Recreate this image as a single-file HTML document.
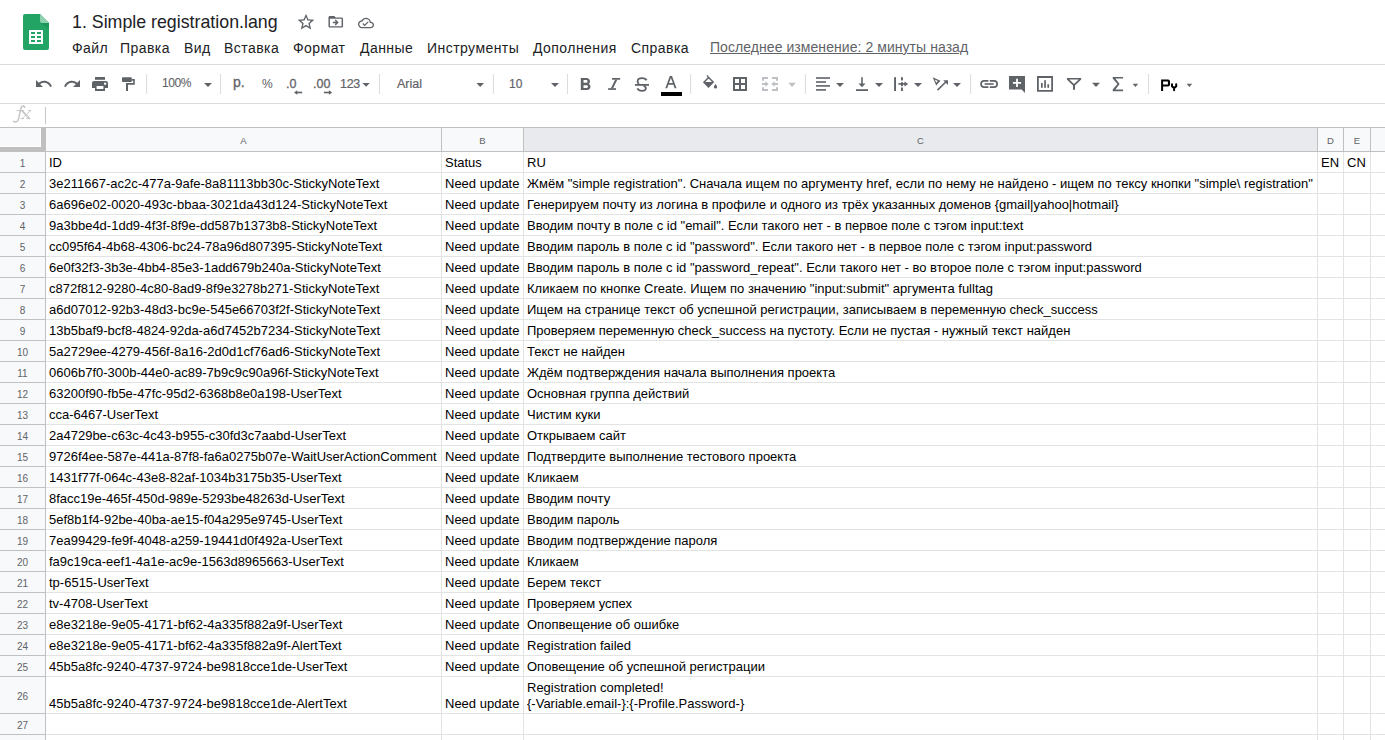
<!DOCTYPE html>
<html><head><meta charset="utf-8"><style>
*{box-sizing:border-box}
html,body{margin:0;padding:0}
body{width:1385px;height:740px;overflow:hidden;position:relative;background:#fff;font-family:"Liberation Sans",sans-serif;color:#000}
.a{position:absolute}
.hl{position:absolute;left:0;width:1385px;height:1px}
.vl{position:absolute;width:1px}
.menu{position:absolute;top:40px;font-size:14px;line-height:17px;color:#202124;white-space:pre;letter-spacing:0.45px}
.ic{position:absolute}
.sep{position:absolute;top:74px;width:1px;height:20px;background:#dadce0}
.tri{position:absolute;width:0;height:0;border-left:4px solid transparent;border-right:4px solid transparent;border-top:4px solid #5f6368}
.c{position:absolute;font-size:13px;line-height:15px;white-space:pre;color:#000;transform-origin:0 12px;transform:scaleY(1.05)}
.rh{position:absolute;left:0;width:45px;text-align:center;font-size:10px;line-height:12px;color:#5f6368}
.ch{position:absolute;top:134.5px;text-align:center;font-size:9.5px;line-height:12px;color:#5f6368}
</style></head><body>

<svg class="a" style="left:23px;top:14px" width="26" height="36" viewBox="0 0 26 36">
<path d="M2 0H17L26 9V34A2 2 0 0 1 24 36H2A2 2 0 0 1 0 34V2A2 2 0 0 1 2 0Z" fill="#21a464"/>
<path d="M17 0L26 9H19A2 2 0 0 1 17 7Z" fill="#8ed1b1"/>
<path d="M17 9L26 9V14.5Z" fill="#1a8a50" opacity="0.55"/>
<rect x="6" y="16" width="14" height="14" fill="#fff"/>
<rect x="8" y="18" width="4" height="2" fill="#21a464"/><rect x="14" y="18" width="4" height="2" fill="#21a464"/>
<rect x="8" y="22" width="4" height="2" fill="#21a464"/><rect x="14" y="22" width="4" height="2" fill="#21a464"/>
<rect x="8" y="26" width="4" height="2" fill="#21a464"/><rect x="14" y="26" width="4" height="2" fill="#21a464"/>
</svg>
<div class="a" style="left:72px;top:11px;font-size:17.8px;line-height:22px;color:#202124;white-space:pre">1. Simple registration.lang</div>
<svg class="ic" style="left:296px;top:12px" width="20" height="20" viewBox="0 0 24 24"><path fill="#5f6368" d="M22 9.24l-7.19-.62L12 2 9.19 8.63 2 9.24l5.46 4.73L5.82 21 12 17.27 18.18 21l-1.63-7.03L22 9.24zM12 15.4l-3.76 2.27 1-4.28-3.32-2.88 4.38-.38L12 6.1l1.71 4.04 4.38.38-3.32 2.88 1 4.28L12 15.4z"/></svg>
<svg class="ic" style="left:326.7px;top:13px" width="17.5" height="17.5" viewBox="0 0 24 24"><path fill="#5f6368" d="M20 6h-8l-2-2H4c-1.1 0-1.99.9-1.99 2L2 18c0 1.1.9 2 2 2h16c1.1 0 2-.9 2-2V8c0-1.1-.9-2-2-2zm0 12H4V8h16v10zm-8.01-9l-1.41 1.41L12.16 12H8v2h4.16l-1.59 1.59L11.99 17 16 13.01 11.99 9z"/></svg>
<svg class="ic" style="left:358px;top:14.8px" width="16" height="16" viewBox="0 0 24 24"><path fill="#5f6368" d="M19.35 10.04C18.67 6.59 15.64 4 12 4 9.11 4 6.6 5.64 5.35 8.04 2.34 8.36 0 10.91 0 14c0 3.31 2.69 6 6 6h13c2.76 0 5-2.24 5-5 0-2.64-2.05-4.78-4.65-4.96zM19 18H6c-2.21 0-4-1.79-4-4 0-2.05 1.53-3.76 3.56-3.97l1.07-.11.5-.95C8.08 7.14 9.94 6 12 6c2.62 0 4.88 1.86 5.39 4.43l.3 1.5 1.53.11c1.56.1 2.78 1.41 2.78 2.96 0 1.65-1.35 3-3 3zm-9-3.82l-2.09-2.09L6.5 13.5 10 17l6.01-6.01-1.41-1.41z"/></svg>
<div class="menu" style="left:72px">Файл</div>
<div class="menu" style="left:120px">Правка</div>
<div class="menu" style="left:184px">Вид</div>
<div class="menu" style="left:224px">Вставка</div>
<div class="menu" style="left:293px">Формат</div>
<div class="menu" style="left:360px">Данные</div>
<div class="menu" style="left:427px">Инструменты</div>
<div class="menu" style="left:533px">Дополнения</div>
<div class="menu" style="left:631px">Справка</div>
<div class="menu" style="left:710px;top:39px;color:#5f6368;text-decoration:underline;letter-spacing:0.06px">Последнее изменение: 2 минуты назад</div>
<div class="hl" style="top:64px;background:#dadce0"></div>
<div class="hl" style="top:103px;background:#dadce0"></div>
<div class="hl" style="top:127px;background:#c0c0c0"></div>
<svg class="a" style="left:0;top:64px" width="1385" height="40" viewBox="0 64 1385 40">
<g fill="#5f6368">
<!-- undo -->
<path transform="translate(34.45 74.58) scale(0.775)" d="M12.5 8c-2.65 0-5.05.99-6.9 2.6L2 7v9h9l-3.62-3.62c1.39-1.16 3.16-1.88 5.12-1.88 3.54 0 6.55 2.31 7.6 5.5l2.37-.78C21.08 11.03 17.15 8 12.5 8z"/>
<!-- redo -->
<path transform="translate(81.55 74.58) scale(-0.775 0.775)" d="M12.5 8c-2.65 0-5.05.99-6.9 2.6L2 7v9h9l-3.62-3.62c1.39-1.16 3.16-1.88 5.12-1.88 3.54 0 6.55 2.31 7.6 5.5l2.37-.78C21.08 11.03 17.15 8 12.5 8z"/>
<!-- print -->
<rect x="95" y="77" width="10" height="2.8"/>
<path d="M94 81H106A2 2 0 0 1 108 83V88H105V86H95V88H92V83A2 2 0 0 1 94 81Z"/>
<rect x="95" y="89" width="10" height="2"/>
<rect x="95" y="86" width="1.6" height="5"/><rect x="103.4" y="86" width="1.6" height="5"/>
<rect x="104" y="82.7" width="2.2" height="2" fill="#fff"/>
<!-- paint format -->
<rect x="122" y="77.2" width="9.8" height="4.8" rx="0.8"/>
<path d="M131.8 79.1H134.8V84.7H128V91.1H126V83.1H133.2V80.7H131.8Z"/>
<!-- dropdown triangles -->
<path d="M204 83H212L208 87Z"/>
<path d="M362.4 83H369.8L366.1 86.8Z"/>
<path d="M476.4 83H484L480.2 87Z"/>
<path d="M551 83H559L555 87Z"/>
<path d="M836 83H844L840 87Z"/>
<path d="M875 83H883L879 87Z"/>
<path d="M914 83H922L918 87Z"/>
<path d="M953 83H961L957 87Z"/>
<path d="M1092 82.7H1100L1096 86.9Z"/>
<path d="M1132.6 83.8H1138.2L1135.4 86.9Z"/>
<path d="M1186.6 83.8H1192.2L1189.4 86.9Z"/>
<!-- .0 arrows -->
<rect x="296" y="91.7" width="6.2" height="1.6"/><path d="M294 92.5L297.3 90.2V94.8Z"/>
<rect x="323.9" y="91.7" width="6" height="1.6"/><path d="M332.2 92.5L328.9 90.2V94.8Z"/>
<!-- B -->
<path transform="translate(574.5 74.5) scale(0.9 0.865)" d="M15.6 10.79c.97-.67 1.65-1.77 1.65-2.79 0-2.26-1.75-4-4-4H7v14h7.04c2.09 0 3.71-1.7 3.71-3.79 0-1.52-.86-2.82-2.15-3.42zM10 6.5h3c.83 0 1.5.67 1.5 1.5s-.67 1.5-1.5 1.5h-3v-3zm3.5 9H10v-3h3.5c.83 0 1.5.67 1.5 1.5s-.67 1.5-1.5 1.5z"/>
<!-- I -->
<rect x="612" y="78" width="8.2" height="1.7"/>
<rect x="608.1" y="88.2" width="7.9" height="1.7"/>
<path d="M615.2 79.5H617.4L613 88.5H610.8Z"/>
<!-- S -->
<path d="M646.6 80.3C645.9 79 644.3 78.2 642.2 78.2C639.4 78.2 637.6 79.7 637.6 81.5C637.6 82.6 638.2 83.3 639 83.9" fill="none" stroke="#5f6368" stroke-width="1.8"/>
<path d="M643.6 85.8C645 86.3 645.9 86.9 645.9 88C645.9 89.6 644.4 90.8 642 90.8C639.7 90.8 638.1 89.8 637.4 88.3" fill="none" stroke="#5f6368" stroke-width="1.8"/>
<rect x="635" y="84" width="14" height="1.8"/>
<!-- A black bar -->
<rect x="661" y="92" width="21" height="4" fill="#000"/>
<!-- A -->
<path d="M669.8 76H672L676.5 88.2H674.6L673.4 84.8H668.4L667.2 88.2H665.3Z M669 83.1H672.8L670.9 77.9Z"/>
<!-- fill bucket -->
<path d="M708.6 76.5L714.2 82.1L708.5 87.9L702.9 82.2Z M708.6 78.6L705.2 82H712Z" fill-rule="evenodd"/>
<path d="M706.5 75.6L707.6 75L709.6 78.2L708.6 78.9Z"/>
<path d="M715.5 83.9C716.2 85 717.1 86 717.1 86.9A1.6 1.6 0 0 1 713.9 86.9C713.9 86 714.8 85 715.5 83.9Z"/>
<!-- borders -->
<path d="M733 77H747V91H733Z M735 79V83H739V79Z M741 79V83H745V79Z M735 85V89H739V85Z M741 85V89H745V85Z" fill-rule="evenodd"/>
</g>
<g fill="#bdc1c6">
<!-- merge disabled -->
<path d="M762 77H768V79H764V80.7H762Z M772 77H778V80.7H776V79H772Z M762 87.3H764V89H768V91H762Z M776 87.3H778V91H772V89H776Z"/>
<path d="M762 83.1H765.4V81.3L768.7 84L765.4 86.7V84.9H762Z"/>
<path d="M778 83.1H774.6V81.3L771.3 84L774.6 86.7V84.9H778Z"/>
<path d="M788.3 82.8H795.9L792.1 87Z"/>
</g>
<g fill="#5f6368">
<!-- align left -->
<rect x="816" y="77.2" width="14" height="1.6"/>
<rect x="816" y="81.2" width="10" height="1.6"/>
<rect x="816" y="85.1" width="14" height="1.6"/>
<rect x="816" y="89.1" width="10" height="1.6"/>
<!-- valign bottom -->
<rect x="861.2" y="77.2" width="1.6" height="7"/>
<path d="M858.5 83.6H865.5L862 87.3Z"/>
<rect x="856" y="89.2" width="12" height="1.8"/>
<!-- wrap -->
<rect x="894.1" y="77.2" width="1.9" height="13.8"/>
<rect x="901" y="77.2" width="1.9" height="3.2"/>
<rect x="901" y="82.2" width="1.9" height="4"/>
<rect x="901" y="87.5" width="1.9" height="3.5"/>
<rect x="898.4" y="83.1" width="7" height="1.6"/>
<path d="M904.5 81.4L908.2 83.9L904.5 86.4Z"/>
<!-- rotate -->
<path d="M932.7 77.2L940.5 80.7L936.2 85.6Z M934.8 79.6L937.8 80.9L936.2 82.7Z" fill-rule="evenodd"/>
<path d="M937 89.6L946.2 80.5L947.3 81.6L938.1 90.7Z"/>
<path d="M943.2 80.3H948V85.1Z"/>
<!-- link -->
<path d="M984.2 80A4 4 0 0 0 984.2 88H988.4V86.3H984.2A2.3 2.3 0 0 1 984.2 81.7H988.4V80Z"/>
<path d="M994 80A4 4 0 0 1 994 88H989.8V86.3H994A2.3 2.3 0 0 0 994 81.7H989.8V80Z"/>
<rect x="984.6" y="83.2" width="9" height="1.6"/>
<!-- comment -->
<path d="M1009 76.1H1025V93L1021.6 89.5H1009Z"/>
<path d="M1016.1 78.7H1017.9V81.9H1021.1V83.7H1017.9V86.9H1016.1V83.7H1012.9V81.9H1016.1Z" fill="#fff"/>
<!-- chart -->
<path d="M1037 76.1H1053V91.7H1037Z M1038.8 77.9V89.9H1051.2V77.9Z" fill-rule="evenodd"/>
<rect x="1041" y="83" width="1.7" height="4.8"/>
<rect x="1044.2" y="80.2" width="1.7" height="7.6"/>
<rect x="1047.4" y="84.3" width="1.7" height="3.5"/>
<!-- filter -->
<path d="M1066.9 78H1081.2V79.6L1075 85.6V89.8H1073V85.6L1066.9 79.6Z M1069.3 79.6L1074 84.1L1078.7 79.6Z" fill-rule="evenodd"/>
<!-- sigma -->
<path d="M1112.7 76.9H1123.1V78.6H1115.4L1119.6 84L1115.4 89.5H1123.1V91.2H1112.7V89.6L1117.4 84L1112.7 78.5Z"/>
</g>
<!-- Py -->
<path fill="#000" fill-rule="evenodd" d="M1161.1 79.4H1168A2 2 0 0 1 1170 81.4V84.5A2 2 0 0 1 1168 86.5H1163.1V91H1161.1Z M1163.1 81.5V84.5H1167.9V81.5Z"/>
<path fill="none" stroke="#000" stroke-width="2" stroke-linecap="round" d="M1172 84.3V86.2L1174.1 88.1L1176.2 86.2V84.3 M1174.1 88V90.2"/>
<!-- separators -->
<g fill="#dadce0">
<rect x="146" y="74" width="1" height="20"/>
<rect x="220" y="74" width="1" height="20"/>
<rect x="379" y="74" width="1" height="20"/>
<rect x="493" y="74" width="1" height="20"/>
<rect x="567" y="74" width="1" height="20"/>
<rect x="690" y="74" width="1" height="20"/>
<rect x="805" y="74" width="1" height="20"/>
<rect x="970" y="74" width="1" height="20"/>
<rect x="1148" y="74" width="1" height="20"/>
</g>
</svg>
<div class="a" style="left:162px;top:77px;font-size:12px;line-height:13px;color:#5f6368;letter-spacing:-0.4px;-webkit-text-stroke:0.1px #5f6368">100%</div>
<div class="a" style="left:233px;top:75px;font-size:14px;line-height:15px;color:#5f6368;-webkit-text-stroke:0.3px #5f6368">р.</div>
<div class="a" style="left:262px;top:78px;font-size:12px;line-height:13px;color:#5f6368;letter-spacing:-0.5px;-webkit-text-stroke:0.05px #5f6368">%</div>
<div class="a" style="left:286px;top:77px;font-size:12.5px;line-height:14px;color:#5f6368;white-space:pre;-webkit-text-stroke:0.3px #5f6368">.0</div>
<div class="a" style="left:313px;top:77px;font-size:12.5px;line-height:14px;color:#5f6368;white-space:pre;-webkit-text-stroke:0.3px #5f6368">.00</div>
<div class="a" style="left:340px;top:77px;font-size:12.5px;line-height:14px;color:#5f6368;white-space:pre;letter-spacing:-0.3px;-webkit-text-stroke:0.2px #5f6368">123</div>
<div class="a" style="left:397px;top:76.5px;font-size:12.5px;line-height:15px;color:#5f6368;-webkit-text-stroke:0.2px #5f6368">Arial</div>
<div class="a" style="left:509px;top:77px;font-size:12px;line-height:14px;color:#5f6368;-webkit-text-stroke:0.2px #5f6368">10</div>


<svg class="a" style="left:0;top:103px" width="45" height="24" viewBox="0 103 45 24"><g fill="none" stroke="#c4c7c5" stroke-linecap="round">
<path d="M24.6 107.6C24.6 105.9 22.6 105.4 21.6 106.8C20.4 108.6 19.4 116.8 18.3 119.6C17.4 122 15.2 122.6 13.6 121.4" stroke-width="1.5"/>
<path d="M16.9 110.6H22.6" stroke-width="1"/>
<path d="M22.2 110.8L29.4 118.5" stroke-width="1.7"/>
<path d="M30.2 110.9L22.2 118.5" stroke-width="0.9"/>
<path d="M20.9 110.6H23.4 M28.3 110.6H30.8 M21 118.6H23.6 M26.6 118.6H29.8" stroke-width="1"/>
</g></svg>
<div class="vl" style="left:45px;top:107px;height:17px;background:#c4c7c5"></div>
<div class="a" style="left:0;top:128px;width:1385px;height:23px;background:#f8f9fa"></div>
<div class="a" style="left:524px;top:128px;width:793px;height:23px;background:#e8eaed"></div>
<div class="a" style="left:0;top:152px;width:45px;height:588px;background:#f8f9fa"></div>
<div class="a" style="left:0;top:172px;width:45px;height:1px;background:#c0c0c0"></div>
<div class="a" style="left:46px;top:172px;width:1339px;height:1px;background:#e2e3e3"></div>
<div class="a" style="left:0;top:193px;width:45px;height:1px;background:#c0c0c0"></div>
<div class="a" style="left:46px;top:193px;width:1339px;height:1px;background:#e2e3e3"></div>
<div class="a" style="left:0;top:214px;width:45px;height:1px;background:#c0c0c0"></div>
<div class="a" style="left:46px;top:214px;width:1339px;height:1px;background:#e2e3e3"></div>
<div class="a" style="left:0;top:235px;width:45px;height:1px;background:#c0c0c0"></div>
<div class="a" style="left:46px;top:235px;width:1339px;height:1px;background:#e2e3e3"></div>
<div class="a" style="left:0;top:256px;width:45px;height:1px;background:#c0c0c0"></div>
<div class="a" style="left:46px;top:256px;width:1339px;height:1px;background:#e2e3e3"></div>
<div class="a" style="left:0;top:277px;width:45px;height:1px;background:#c0c0c0"></div>
<div class="a" style="left:46px;top:277px;width:1339px;height:1px;background:#e2e3e3"></div>
<div class="a" style="left:0;top:298px;width:45px;height:1px;background:#c0c0c0"></div>
<div class="a" style="left:46px;top:298px;width:1339px;height:1px;background:#e2e3e3"></div>
<div class="a" style="left:0;top:319px;width:45px;height:1px;background:#c0c0c0"></div>
<div class="a" style="left:46px;top:319px;width:1339px;height:1px;background:#e2e3e3"></div>
<div class="a" style="left:0;top:340px;width:45px;height:1px;background:#c0c0c0"></div>
<div class="a" style="left:46px;top:340px;width:1339px;height:1px;background:#e2e3e3"></div>
<div class="a" style="left:0;top:361px;width:45px;height:1px;background:#c0c0c0"></div>
<div class="a" style="left:46px;top:361px;width:1339px;height:1px;background:#e2e3e3"></div>
<div class="a" style="left:0;top:382px;width:45px;height:1px;background:#c0c0c0"></div>
<div class="a" style="left:46px;top:382px;width:1339px;height:1px;background:#e2e3e3"></div>
<div class="a" style="left:0;top:403px;width:45px;height:1px;background:#c0c0c0"></div>
<div class="a" style="left:46px;top:403px;width:1339px;height:1px;background:#e2e3e3"></div>
<div class="a" style="left:0;top:424px;width:45px;height:1px;background:#c0c0c0"></div>
<div class="a" style="left:46px;top:424px;width:1339px;height:1px;background:#e2e3e3"></div>
<div class="a" style="left:0;top:445px;width:45px;height:1px;background:#c0c0c0"></div>
<div class="a" style="left:46px;top:445px;width:1339px;height:1px;background:#e2e3e3"></div>
<div class="a" style="left:0;top:466px;width:45px;height:1px;background:#c0c0c0"></div>
<div class="a" style="left:46px;top:466px;width:1339px;height:1px;background:#e2e3e3"></div>
<div class="a" style="left:0;top:487px;width:45px;height:1px;background:#c0c0c0"></div>
<div class="a" style="left:46px;top:487px;width:1339px;height:1px;background:#e2e3e3"></div>
<div class="a" style="left:0;top:508px;width:45px;height:1px;background:#c0c0c0"></div>
<div class="a" style="left:46px;top:508px;width:1339px;height:1px;background:#e2e3e3"></div>
<div class="a" style="left:0;top:529px;width:45px;height:1px;background:#c0c0c0"></div>
<div class="a" style="left:46px;top:529px;width:1339px;height:1px;background:#e2e3e3"></div>
<div class="a" style="left:0;top:550px;width:45px;height:1px;background:#c0c0c0"></div>
<div class="a" style="left:46px;top:550px;width:1339px;height:1px;background:#e2e3e3"></div>
<div class="a" style="left:0;top:571px;width:45px;height:1px;background:#c0c0c0"></div>
<div class="a" style="left:46px;top:571px;width:1339px;height:1px;background:#e2e3e3"></div>
<div class="a" style="left:0;top:592px;width:45px;height:1px;background:#c0c0c0"></div>
<div class="a" style="left:46px;top:592px;width:1339px;height:1px;background:#e2e3e3"></div>
<div class="a" style="left:0;top:613px;width:45px;height:1px;background:#c0c0c0"></div>
<div class="a" style="left:46px;top:613px;width:1339px;height:1px;background:#e2e3e3"></div>
<div class="a" style="left:0;top:634px;width:45px;height:1px;background:#c0c0c0"></div>
<div class="a" style="left:46px;top:634px;width:1339px;height:1px;background:#e2e3e3"></div>
<div class="a" style="left:0;top:655px;width:45px;height:1px;background:#c0c0c0"></div>
<div class="a" style="left:46px;top:655px;width:1339px;height:1px;background:#e2e3e3"></div>
<div class="a" style="left:0;top:676px;width:45px;height:1px;background:#c0c0c0"></div>
<div class="a" style="left:46px;top:676px;width:1339px;height:1px;background:#e2e3e3"></div>
<div class="a" style="left:0;top:713px;width:45px;height:1px;background:#c0c0c0"></div>
<div class="a" style="left:46px;top:713px;width:1339px;height:1px;background:#e2e3e3"></div>
<div class="a" style="left:0;top:734px;width:45px;height:1px;background:#c0c0c0"></div>
<div class="a" style="left:46px;top:734px;width:1339px;height:1px;background:#e2e3e3"></div>
<div class="a" style="left:0;top:755px;width:45px;height:1px;background:#c0c0c0"></div>
<div class="a" style="left:46px;top:755px;width:1339px;height:1px;background:#e2e3e3"></div>
<div class="hl" style="top:151px;background:#c0c0c0"></div>
<div class="vl" style="left:45px;top:128px;height:612px;background:#c0c0c0"></div>
<div class="vl" style="left:441px;top:128px;height:23px;background:#c0c0c0"></div>
<div class="vl" style="left:441px;top:152px;height:588px;background:#e2e3e3"></div>
<div class="vl" style="left:523px;top:128px;height:23px;background:#c0c0c0"></div>
<div class="vl" style="left:523px;top:152px;height:588px;background:#e2e3e3"></div>
<div class="vl" style="left:1317px;top:128px;height:23px;background:#c0c0c0"></div>
<div class="vl" style="left:1317px;top:152px;height:588px;background:#e2e3e3"></div>
<div class="vl" style="left:1343px;top:128px;height:23px;background:#c0c0c0"></div>
<div class="vl" style="left:1343px;top:152px;height:588px;background:#e2e3e3"></div>
<div class="vl" style="left:1370px;top:128px;height:23px;background:#c0c0c0"></div>
<div class="vl" style="left:1370px;top:152px;height:588px;background:#e2e3e3"></div>
<div class="a" style="left:41px;top:128px;width:5px;height:24px;background:#c0c0c0"></div>
<div class="a" style="left:0;top:147px;width:46px;height:5px;background:#c0c0c0"></div>
<div class="a" style="left:40px;top:128px;width:1px;height:19px;background:#fff"></div>
<div class="a" style="left:0;top:146px;width:41px;height:1px;background:#fff"></div>
<div class="ch" style="left:46px;width:395px">A</div>
<div class="ch" style="left:442px;width:81px">B</div>
<div class="ch" style="left:524px;width:793px">C</div>
<div class="ch" style="left:1318px;width:25px">D</div>
<div class="ch" style="left:1344px;width:26px">E</div>
<div class="rh" style="top:158px">1</div>
<div class="rh" style="top:179px">2</div>
<div class="rh" style="top:200px">3</div>
<div class="rh" style="top:221px">4</div>
<div class="rh" style="top:242px">5</div>
<div class="rh" style="top:263px">6</div>
<div class="rh" style="top:284px">7</div>
<div class="rh" style="top:305px">8</div>
<div class="rh" style="top:326px">9</div>
<div class="rh" style="top:347px">10</div>
<div class="rh" style="top:368px">11</div>
<div class="rh" style="top:389px">12</div>
<div class="rh" style="top:410px">13</div>
<div class="rh" style="top:431px">14</div>
<div class="rh" style="top:452px">15</div>
<div class="rh" style="top:473px">16</div>
<div class="rh" style="top:494px">17</div>
<div class="rh" style="top:515px">18</div>
<div class="rh" style="top:536px">19</div>
<div class="rh" style="top:557px">20</div>
<div class="rh" style="top:578px">21</div>
<div class="rh" style="top:599px">22</div>
<div class="rh" style="top:620px">23</div>
<div class="rh" style="top:641px">24</div>
<div class="rh" style="top:662px">25</div>
<div class="rh" style="top:691px">26</div>
<div class="rh" style="top:720px">27</div>
<div class="rh" style="top:741px">28</div>
<div class="c" style="left:49px;top:155px">ID</div>
<div class="c" style="left:445px;top:155px">Status</div>
<div class="c" style="left:527px;top:155px">RU</div>
<div class="c" style="left:1321px;top:155px">EN</div>
<div class="c" style="left:1347px;top:155px">CN</div>
<div class="c" style="left:49px;top:176px">3e211667-ac2c-477a-9afe-8a81113bb30c-StickyNoteText</div>
<div class="c" style="left:445px;top:176px">Need update</div>
<div class="c" style="left:527px;top:176px">Жмём &quot;simple registration&quot;. Сначала ищем по аргументу href, если по нему не найдено - ищем по тексу кнопки &quot;simple\ registration&quot;</div>
<div class="c" style="left:49px;top:197px">6a696e02-0020-493c-bbaa-3021da43d124-StickyNoteText</div>
<div class="c" style="left:445px;top:197px">Need update</div>
<div class="c" style="left:527px;top:197px">Генерируем почту из логина в профиле и одного из трёх указанных доменов {gmail|yahoo|hotmail}</div>
<div class="c" style="left:49px;top:218px">9a3bbe4d-1dd9-4f3f-8f9e-dd587b1373b8-StickyNoteText</div>
<div class="c" style="left:445px;top:218px">Need update</div>
<div class="c" style="left:527px;top:218px">Вводим почту в поле с id &quot;email&quot;. Если такого нет - в первое поле с тэгом input:text</div>
<div class="c" style="left:49px;top:239px">cc095f64-4b68-4306-bc24-78a96d807395-StickyNoteText</div>
<div class="c" style="left:445px;top:239px">Need update</div>
<div class="c" style="left:527px;top:239px">Вводим пароль в поле с id &quot;password&quot;. Если такого нет - в первое поле с тэгом input:password</div>
<div class="c" style="left:49px;top:260px">6e0f32f3-3b3e-4bb4-85e3-1add679b240a-StickyNoteText</div>
<div class="c" style="left:445px;top:260px">Need update</div>
<div class="c" style="left:527px;top:260px">Вводим пароль в поле с id &quot;password_repeat&quot;. Если такого нет - во второе поле с тэгом input:password</div>
<div class="c" style="left:49px;top:281px">c872f812-9280-4c80-8ad9-8f9e3278b271-StickyNoteText</div>
<div class="c" style="left:445px;top:281px">Need update</div>
<div class="c" style="left:527px;top:281px">Кликаем по кнопке Create. Ищем по значению &quot;input:submit&quot; аргумента fulltag</div>
<div class="c" style="left:49px;top:302px">a6d07012-92b3-48d3-bc9e-545e66703f2f-StickyNoteText</div>
<div class="c" style="left:445px;top:302px">Need update</div>
<div class="c" style="left:527px;top:302px">Ищем на странице текст об успешной регистрации, записываем в переменную check_success</div>
<div class="c" style="left:49px;top:323px">13b5baf9-bcf8-4824-92da-a6d7452b7234-StickyNoteText</div>
<div class="c" style="left:445px;top:323px">Need update</div>
<div class="c" style="left:527px;top:323px">Проверяем переменную check_success на пустоту. Если не пустая - нужный текст найден</div>
<div class="c" style="left:49px;top:344px">5a2729ee-4279-456f-8a16-2d0d1cf76ad6-StickyNoteText</div>
<div class="c" style="left:445px;top:344px">Need update</div>
<div class="c" style="left:527px;top:344px">Текст не найден</div>
<div class="c" style="left:49px;top:365px">0606b7f0-300b-44e0-ac89-7b9c9c90a96f-StickyNoteText</div>
<div class="c" style="left:445px;top:365px">Need update</div>
<div class="c" style="left:527px;top:365px">Ждём подтверждения начала выполнения проекта</div>
<div class="c" style="left:49px;top:386px">63200f90-fb5e-47fc-95d2-6368b8e0a198-UserText</div>
<div class="c" style="left:445px;top:386px">Need update</div>
<div class="c" style="left:527px;top:386px">Основная группа действий</div>
<div class="c" style="left:49px;top:407px">cca-6467-UserText</div>
<div class="c" style="left:445px;top:407px">Need update</div>
<div class="c" style="left:527px;top:407px">Чистим куки</div>
<div class="c" style="left:49px;top:428px">2a4729be-c63c-4c43-b955-c30fd3c7aabd-UserText</div>
<div class="c" style="left:445px;top:428px">Need update</div>
<div class="c" style="left:527px;top:428px">Открываем сайт</div>
<div class="c" style="left:49px;top:449px">9726f4ee-587e-441a-87f8-fa6a0275b07e-WaitUserActionComment</div>
<div class="c" style="left:445px;top:449px">Need update</div>
<div class="c" style="left:527px;top:449px">Подтвердите выполнение тестового проекта</div>
<div class="c" style="left:49px;top:470px">1431f77f-064c-43e8-82af-1034b3175b35-UserText</div>
<div class="c" style="left:445px;top:470px">Need update</div>
<div class="c" style="left:527px;top:470px">Кликаем</div>
<div class="c" style="left:49px;top:491px">8facc19e-465f-450d-989e-5293be48263d-UserText</div>
<div class="c" style="left:445px;top:491px">Need update</div>
<div class="c" style="left:527px;top:491px">Вводим почту</div>
<div class="c" style="left:49px;top:512px">5ef8b1f4-92be-40ba-ae15-f04a295e9745-UserText</div>
<div class="c" style="left:445px;top:512px">Need update</div>
<div class="c" style="left:527px;top:512px">Вводим пароль</div>
<div class="c" style="left:49px;top:533px">7ea99429-fe9f-4048-a259-19441d0f492a-UserText</div>
<div class="c" style="left:445px;top:533px">Need update</div>
<div class="c" style="left:527px;top:533px">Вводим подтверждение пароля</div>
<div class="c" style="left:49px;top:554px">fa9c19ca-eef1-4a1e-ac9e-1563d8965663-UserText</div>
<div class="c" style="left:445px;top:554px">Need update</div>
<div class="c" style="left:527px;top:554px">Кликаем</div>
<div class="c" style="left:49px;top:575px">tp-6515-UserText</div>
<div class="c" style="left:445px;top:575px">Need update</div>
<div class="c" style="left:527px;top:575px">Берем текст</div>
<div class="c" style="left:49px;top:596px">tv-4708-UserText</div>
<div class="c" style="left:445px;top:596px">Need update</div>
<div class="c" style="left:527px;top:596px">Проверяем успех</div>
<div class="c" style="left:49px;top:617px">e8e3218e-9e05-4171-bf62-4a335f882a9f-UserText</div>
<div class="c" style="left:445px;top:617px">Need update</div>
<div class="c" style="left:527px;top:617px">Опопвещение об ошибке</div>
<div class="c" style="left:49px;top:638px">e8e3218e-9e05-4171-bf62-4a335f882a9f-AlertText</div>
<div class="c" style="left:445px;top:638px">Need update</div>
<div class="c" style="left:527px;top:638px">Registration failed</div>
<div class="c" style="left:49px;top:659px">45b5a8fc-9240-4737-9724-be9818cce1de-UserText</div>
<div class="c" style="left:445px;top:659px">Need update</div>
<div class="c" style="left:527px;top:659px">Оповещение об успешной регистрации</div>
<div class="c" style="left:49px;top:696px">45b5a8fc-9240-4737-9724-be9818cce1de-AlertText</div>
<div class="c" style="left:445px;top:696px">Need update</div>
<div class="c" style="left:527px;top:680px">Registration completed!<br>{-Variable.email-}:{-Profile.Password-}</div>
</body></html>
